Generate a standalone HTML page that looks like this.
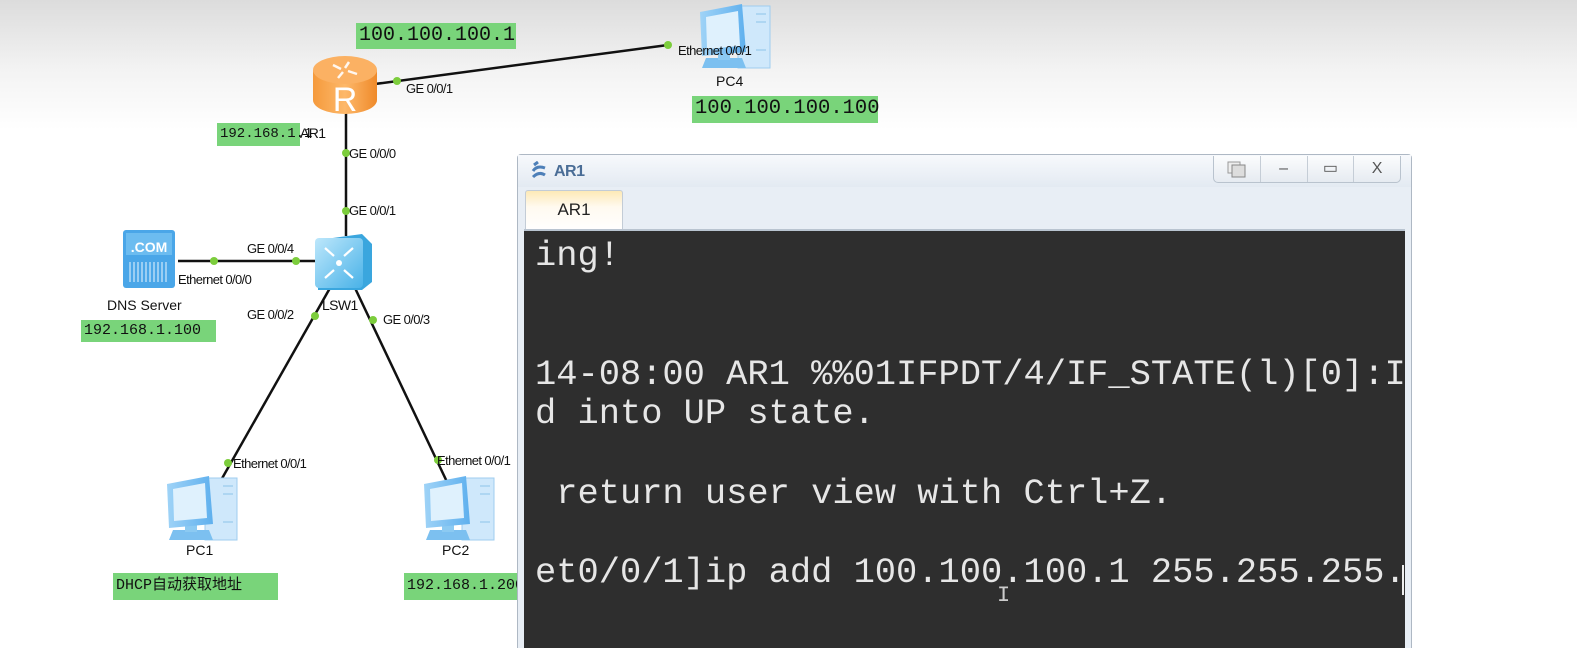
<!DOCTYPE html>
<html><head><meta charset="utf-8"><style>
html,body{margin:0;padding:0;width:1577px;height:648px;overflow:hidden;background:#fff}
body{position:relative;font-family:"Liberation Sans",Arial,sans-serif}
.bg{position:absolute;left:0;top:0;width:1577px;height:648px;background:linear-gradient(#dcdcdc 0,#f3f3f3 70px,#fff 130px)}
.lbl{position:absolute;font-size:13px;color:#111;letter-spacing:-0.6px;white-space:nowrap;line-height:14px}
.gbox{position:absolute;background:#79d47a;font-family:"Liberation Mono",monospace;color:#111;white-space:nowrap;font-size:16px;line-height:26px;padding-left:3px;box-sizing:border-box}
.win{position:absolute;left:517px;top:154px;width:895px;height:500px;border:1px solid #aeb8c4;border-radius:4px 4px 0 0;background:#e8eef5;box-sizing:border-box}
.title{position:absolute;left:0;top:0;right:0;height:32px;background:linear-gradient(#f7f9fc,#e3eaf2)}
.term{position:absolute;left:6px;top:76px;width:881px;height:430px;background:#2e2e2e;overflow:hidden}
.term pre{margin:0;position:absolute;left:11px;top:6px;font-family:"Liberation Mono",monospace;font-size:35.4px;line-height:39.6px;color:#e6e6e6}
.btns{position:absolute;left:695px;top:1px;width:186px;height:26px;border:1px solid #b9c3ce;border-top:none;border-radius:0 0 5px 5px;background:linear-gradient(#fbfcfd,#e6ebf1);display:flex}
.btns div{flex:1;border-left:1px solid #c5cdd6;position:relative;font-size:16px;color:#555;text-align:center;line-height:26px}
.btns div:first-child{border-left:none}
</style></head><body>
<div class="bg"></div>
<svg width="1577" height="648" style="position:absolute;left:0;top:0">
<defs>
<linearGradient id="rg" x1="0" x2="1"><stop offset="0" stop-color="#f59a3c"/><stop offset=".5" stop-color="#fdb86a"/><stop offset="1" stop-color="#ef8a2a"/></linearGradient>
<linearGradient id="pg" x1="0" x2="1"><stop offset="0" stop-color="#9fd3f7"/><stop offset="1" stop-color="#5fb0ee"/></linearGradient>
<linearGradient id="sg" x1="0" y1="0" x2="1" y2="1"><stop offset="0" stop-color="#bde7fb"/><stop offset="1" stop-color="#49b2e8"/></linearGradient>
<g id="pc">
<rect x="40" y="6" width="32" height="62" fill="#cfe8fb" stroke="#9fcdef"/>
<line x1="58" y1="14" x2="68" y2="14" stroke="#8ec3ea"/><line x1="58" y1="22" x2="68" y2="22" stroke="#8ec3ea"/><line x1="58" y1="50" x2="68" y2="50" stroke="#8ec3ea"/>
<polygon points="8,58 44,58 48,68 4,68" fill="#7cc0f0"/>
<rect x="20" y="50" width="12" height="10" fill="#8ccaf2"/>
<polygon points="2,12 44,4 48,52 4,56" fill="url(#pg)"/>
<polygon points="8,17 40,11 42,46 9,49" fill="#dff1fd"/>
</g>
</defs>
<g stroke="#111" stroke-width="2.5" fill="none">
<line x1="375" y1="84" x2="668" y2="45"/>
<line x1="346" y1="110" x2="346" y2="236"/>
<line x1="178" y1="261" x2="318" y2="261"/>
<line x1="330" y1="288" x2="220" y2="482"/>
<line x1="355" y1="288" x2="448" y2="484"/>
</g>
<path d="M313,70 L313,100 A32,14 0 0 0 377,100 L377,70 Z" fill="url(#rg)"/>
<ellipse cx="345" cy="70" rx="32" ry="14" fill="#fbb163"/>
<g stroke="#fff" stroke-width="2.5" fill="none" opacity=".9"><path d="M333,65 l8,4 M349,62 l-4,6 M357,74 l-9,-3 M338,78 l5,-6"/></g>
<text x="345" y="111" font-family="Liberation Sans" font-size="34" fill="#fff" text-anchor="middle">R</text>
<polygon points="318,240 362,234 372,244 372,282 362,290 318,290" fill="#3aa6de"/>
<rect x="315" y="238" width="48" height="50" rx="4" fill="url(#sg)"/>
<g stroke="#fff" stroke-width="2.2" fill="none"><path d="M325,248 l9,8 M353,248 l-9,8 M325,278 l9,-8 M353,278 l-9,-8"/></g>
<circle cx="339" cy="263" r="3" fill="#fff"/>
<rect x="123" y="230" width="52" height="58" rx="3" fill="#4aa6e8"/>
<rect x="126" y="233" width="46" height="22" fill="#6cbcf0"/>
<text x="149" y="252" font-size="14" font-weight="bold" fill="#fff" text-anchor="middle" font-family="Liberation Sans">.COM</text>
<g stroke="#cfe9fb" stroke-width="1.2"><path d="M130,262 v20 M134,262 v20 M138,262 v20 M142,262 v20 M146,262 v20 M150,262 v20 M154,262 v20 M158,262 v20 M162,262 v20 M166,262 v20"/></g>
<use href="#pc" x="165" y="472"/>
<use href="#pc" x="422" y="472"/>
<use href="#pc" x="698" y="0"/>
<g fill="#7ccd3c">
<circle cx="397" cy="81" r="4"/><circle cx="668" cy="45" r="4"/>
<circle cx="346" cy="153" r="4"/><circle cx="346" cy="211" r="4"/>
<circle cx="214" cy="261" r="4"/><circle cx="296" cy="261" r="4"/>
<circle cx="315" cy="316" r="4"/><circle cx="373" cy="320" r="4"/>
<circle cx="228" cy="463" r="4"/><circle cx="438" cy="460" r="4"/>
</g>
</svg>
<div class="gbox" style="left:356px;top:23px;width:160px;height:26px;font-size:20px">100.100.100.1</div>
<div class="gbox" style="left:692px;top:96px;width:186px;height:27px;font-size:20.5px">100.100.100.100</div>
<div class="gbox" style="left:217px;top:123px;width:83px;height:23px;line-height:23px;font-size:14px">192.168.1.1</div>
<div class="gbox" style="left:81px;top:320px;width:135px;height:22px;line-height:22px;font-size:15px">192.168.1.100</div>
<div class="gbox" style="left:113px;top:573px;width:165px;height:27px;font-size:15px;font-family:'Liberation Mono','Noto Sans CJK SC',monospace">DHCP自动获取地址</div>
<div class="gbox" style="left:404px;top:573px;width:114px;height:27px;font-size:15px;overflow:hidden">192.168.1.200</div>
<div class="lbl" style="left:406px;top:82px">GE 0/0/1</div>
<div class="lbl" style="left:678px;top:44px">Ethernet 0/0/1</div>
<div class="lbl" style="left:716px;top:74px;font-size:14px;letter-spacing:0">PC4</div>
<div class="lbl" style="left:300px;top:126px;font-size:14px">AR1</div>
<div class="lbl" style="left:349px;top:147px">GE 0/0/0</div>
<div class="lbl" style="left:349px;top:204px">GE 0/0/1</div>
<div class="lbl" style="left:247px;top:242px">GE 0/0/4</div>
<div class="lbl" style="left:178px;top:273px">Ethernet 0/0/0</div>
<div class="lbl" style="left:107px;top:298px;font-size:14px;letter-spacing:0">DNS Server</div>
<div class="lbl" style="left:322px;top:298px;font-size:14px">LSW1</div>
<div class="lbl" style="left:247px;top:308px">GE 0/0/2</div>
<div class="lbl" style="left:383px;top:313px">GE 0/0/3</div>
<div class="lbl" style="left:233px;top:457px">Ethernet 0/0/1</div>
<div class="lbl" style="left:437px;top:454px">Ethernet 0/0/1</div>
<div class="lbl" style="left:186px;top:543px;font-size:14px;letter-spacing:0">PC1</div>
<div class="lbl" style="left:442px;top:543px;font-size:14px;letter-spacing:0">PC2</div>
<div class="win">
 <div class="title">
  <svg width="20" height="20" style="position:absolute;left:12px;top:6px"><path d="M4,4 l4,-3 M3,10 q4,-6 12,-3 M3,16 q6,-6 12,-2" stroke="#4d7fb8" stroke-width="3" fill="none"/></svg>
  <div style="position:absolute;left:36px;top:8px;font-size:16px;color:#4a6d96;font-weight:bold;letter-spacing:-0.5px">AR1</div>
  <div class="btns"><div><svg width="22" height="18" style="margin-top:4px"><rect x="2" y="2" width="12" height="11" fill="#eee" stroke="#999"/><rect x="6" y="5" width="13" height="12" fill="#ddd" stroke="#888"/></svg></div><div>–</div><div>▭</div><div>X</div></div>
 </div>
 <div style="position:absolute;left:7px;top:35px;width:96px;height:40px;border:1px solid #c3ccd6;border-bottom:none;border-radius:3px 3px 0 0;background:linear-gradient(#fde9b6,#fffaf0 40%,#fff);font-size:17px;text-align:center;line-height:38px;color:#222">AR1</div>
 <div style="position:absolute;left:6px;top:74px;right:6px;height:2px;background:#b9c4d0"></div>
 <div class="term"><pre>ing!


14-08:00 AR1 %%01IFPDT/4/IF_STATE(l)[0]:I
d into UP state.

 return user view with Ctrl+Z.

et0/0/1]ip add 100.100.100.1 255.255.255.</pre>
 <div style="position:absolute;left:878px;top:334px;width:2px;height:30px;background:#eee"></div>
 <div style="position:absolute;left:473px;top:352px;font-family:'Liberation Mono';font-size:22px;color:#ccc">I</div>
 </div>
</div>
</body></html>
